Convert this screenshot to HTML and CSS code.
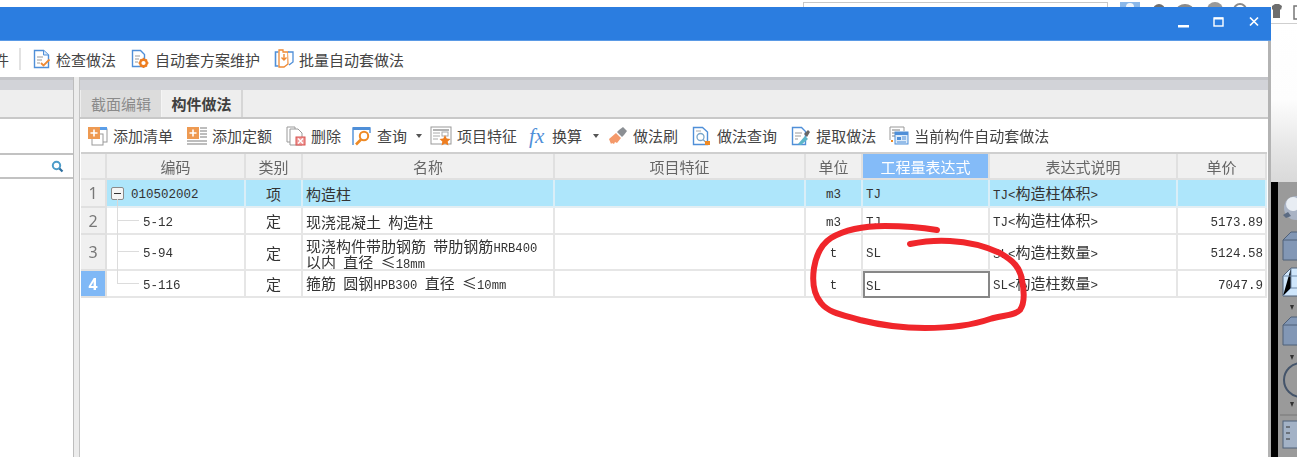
FILE: index.html
```html
<!DOCTYPE html>
<html lang="zh-CN">
<head>
<meta charset="utf-8">
<title>构件做法</title>
<link rel="stylesheet" href="styles.css">
</head>
<body>
<div class="page">
  <div class="left-col">
    <div class="strip">
      <div class="search-box"></div>
      <svg class="strip-icons" width="163" height="7" viewBox="0 0 163 7">
        <rect x="12" y="2" width="20" height="8" fill="#8ab8ea"/>
        <circle cx="22" cy="7" r="4" fill="#eef5fc"/>
        <circle cx="51" cy="10" r="6" fill="#6e6e6e"/>
        <ellipse cx="77" cy="11" rx="9" ry="7" fill="#8a8a8a"/>
        <circle cx="107" cy="10" r="8" fill="#999"/>
        <circle cx="132" cy="10" r="6" fill="none" stroke="#8a8a8a" stroke-width="2"/>
      </svg>
    </div>
    <div class="window">
      <div class="titlebar">
        <svg class="winbtn" width="91" height="14" viewBox="0 0 91 14">
          <rect x="8" y="9" width="11" height="2.5" fill="#fff"/>
          <rect x="44" y="2" width="9" height="8" fill="none" stroke="#fff" stroke-width="1.4"/>
          <rect x="44" y="1.5" width="9" height="2" fill="#fff"/>
          <path d="M80 1.500l8 8M88 1.500l-8 8" stroke="#fff" stroke-width="1.700"/>
        </svg>
      </div>
      <div class="win-body">
        <div class="main-toolbar">
          <span class="clipped">件</span>
          <span class="sep"></span>
          <div class="tool">
            <svg class="ico" width="18" height="20" viewBox="0 0 18 20"><path d="M1.500 1.500h9l5 4.500v12.500h-14z" fill="#fff" stroke="#4f8fd8" stroke-width="1.400"/><path d="M10.500 1.500v4.500h5" fill="#dbe9f8" stroke="#4f8fd8"/><path d="M4 8h6M4 11h5M4 14h3" stroke="#999"/><path d="M8 14l2.500 2.500 6-6" fill="none" stroke="#ee8a35" stroke-width="1.800"/></svg>
            <span>检查做法</span>
          </div>
          <div class="tool tool-auto">
            <svg class="ico" width="19" height="20" viewBox="0 0 19 20"><path d="M1.500 1.500h8l4 4v12h-12z" fill="#fff" stroke="#4f8fd8" stroke-width="1.400"/><path d="M4 7h5M4 10h4M4 13h3" stroke="#999"/><circle cx="12.500" cy="14" r="3.300" fill="#fff" stroke="#ee7d1f" stroke-width="2.400"/><path d="M12.500 8.800v2M12.500 17v2M7.500 14h2M15.500 14h2M9 10.500l1.400 1.400M14.600 16l1.400 1.400M9 17.500l1.400-1.400M14.600 12l1.400-1.400" stroke="#ee7d1f" stroke-width="1.400"/></svg>
            <span>自动套方案维护</span>
          </div>
          <div class="tool">
            <svg class="ico" width="20" height="20" viewBox="0 0 20 20"><path d="M4.500 3h-3v14h3" fill="none" stroke="#4f8fd8" stroke-width="1.600"/><path d="M5 1h4v2h5v12l-4 3h-5z" fill="#fff" stroke="#ee8a35" stroke-width="1.300"/><path d="M14 3h5v10l-4 3" fill="#fff" stroke="#4f8fd8" stroke-width="1.300"/><path d="M10 5v6M7.500 8.500l2.500 2.500 2.500-2.500" fill="none" stroke="#ee8a35" stroke-width="1.400"/></svg>
            <span>批量自动套做法</span>
          </div>
        </div>
        <div class="body-row">
          <aside class="side">
            <div class="side-band"></div>
            <div class="side-tabs"></div>
            <div class="side-blank"></div>
            <div class="side-search">
              <svg width="13" height="13" viewBox="0 0 13 13"><circle cx="5.500" cy="5.500" r="3.700" fill="#fff" stroke="#4d9cc9" stroke-width="2"/><path d="M8.500 8.500l3 3" stroke="#2f6f9f" stroke-width="2.200"/></svg>
            </div>
          </aside>
          <div class="splitter"></div>
          <section class="pane">
            <div class="pane-band"></div>
            <div class="tabs">
              <div class="tab tab-off">截面编辑</div>
              <div class="tab tab-on">构件做法</div>
            </div>
            <div class="sub-toolbar">
              <div class="tool">
                <svg class="ico" width="20" height="20" viewBox="0 0 20 20"><rect x="7" y="3" width="12" height="13" fill="#fff" stroke="#9a9a9a"/><rect x="11" y="1" width="8" height="3" fill="#5b9ee8"/><rect x="4" y="8" width="11" height="11" fill="#fff" stroke="#9a9a9a"/><rect x="0" y="1" width="12" height="12" fill="#ee9a52"/><path d="M6 3.500v7M2.500 7h7" stroke="#fff" stroke-width="1.600"/></svg>
                <span>添加清单</span>
              </div>
              <div class="tool">
                <svg class="ico" width="20" height="20" viewBox="0 0 20 20"><rect x="0" y="1" width="12" height="12" fill="#ee9a52"/><path d="M6 3.500v7M2.500 7h7" stroke="#fff" stroke-width="1.600"/><path d="M13 2h7M13 5h7M13 8h7M13 11h7M0 15h20M0 18h20" stroke="#a8a8a8" stroke-width="1.300"/></svg>
                <span>添加定额</span>
              </div>
              <div class="tool tool-del">
                <svg class="ico" width="20" height="20" viewBox="0 0 20 20"><path d="M1 1h8v15H1z" fill="#fff" stroke="#9a9a9a"/><path d="M4 3h8l4 4v12H4z" fill="#fff" stroke="#9a9a9a"/><rect x="10" y="11" width="9" height="8" fill="#ef9b9b" stroke="#d9534f"/><path d="M12 12.500l5 5M17 12.500l-5 5" stroke="#fff" stroke-width="1.300"/></svg>
                <span>删除</span>
              </div>
              <div class="tool tool-near">
                <svg class="ico" width="20" height="20" viewBox="0 0 20 20"><path d="M1 19V2h17v5" fill="none" stroke="#4f8fd8" stroke-width="1.400"/><rect x="1" y="1" width="17" height="3" fill="#4f8fd8"/><circle cx="12" cy="10" r="4.200" fill="#fff" stroke="#ee8a25" stroke-width="2"/><path d="M9 13.500l-5 5" stroke="#ee8a25" stroke-width="2.600"/></svg>
                <span>查询</span>
                <i class="caret"></i>
              </div>
              <div class="tool tool-close">
                <svg class="ico" width="22" height="20" viewBox="0 0 22 20"><rect x="1" y="1" width="20" height="17" fill="#fff" stroke="#999"/><path d="M3 4h16" stroke="#999" stroke-width="1.500"/><path d="M3 7h7M3 10h7M3 13h5" stroke="#aaa"/><rect x="12" y="6" width="6" height="4" fill="none" stroke="#aaa"/><path d="M15 9l1.700 3.500 3.800.5-2.800 2.600.7 3.800-3.400-1.800-3.400 1.800.7-3.800L9.500 13l3.800-.5z" fill="#ee7d1f"/></svg>
                <span>项目特征</span>
              </div>
              <div class="tool tool-fx">
                <span class="fx">fx</span>
                <span>换算</span>
                <i class="caret"></i>
              </div>
              <div class="tool">
                <svg class="ico" width="20" height="20" viewBox="0 0 20 20"><path d="M11 4l4-3 4 4-3 4-2 2-5-5z" fill="#8b8f94"/><path d="M8 7l5 5-4 5-2-1-1 2-2-1-1 1-2-5z" fill="#f4996a"/></svg>
                <span>做法刷</span>
              </div>
              <div class="tool">
                <svg class="ico" width="20" height="20" viewBox="0 0 20 20"><path d="M1.500 1.500h9l5 4.500v12.500h-14z" fill="#fff" stroke="#4f8fd8" stroke-width="1.400"/><path d="M4 5h5" stroke="#aaa"/><circle cx="8.500" cy="11" r="3.500" fill="#fff" stroke="#7aa6c9" stroke-width="1.300"/><path d="M11 13.500l3 3" stroke="#7aa6c9" stroke-width="1.300"/><rect x="13" y="15" width="5" height="4" fill="#ee8a25"/></svg>
                <span>做法查询</span>
              </div>
              <div class="tool tool-last">
                <svg class="ico" width="20" height="20" viewBox="0 0 20 20"><path d="M1.500 1.500h9l4 4v13h-13z" fill="#fff" stroke="#4f8fd8" stroke-width="1.400"/><path d="M4 7h7M4 10h6M4 13h3" stroke="#999"/><path d="M7 18l7-8 3 3-7 6z" fill="#5cb5c9"/><path d="M13 8l4-4 2 2-3 5z" fill="#666"/></svg>
                <span>提取做法</span>
              </div>
              <div class="tool">
                <svg class="ico" width="20" height="20" viewBox="0 0 20 20"><path d="M1 1h14v4M1 1v13" fill="none" stroke="#999"/><path d="M3 4h8M3 7h3M3 10h3" stroke="#aaa" stroke-width="1.300"/><rect x="6" y="6" width="13" height="12" fill="#dcebfa" stroke="#4f8fd8"/><rect x="6" y="6" width="13" height="3" fill="#4f8fd8"/><rect x="8" y="11" width="4" height="3" fill="#4f8fd8"/><path d="M13 11h4M13 13h4M8 16h9" stroke="#4f8fd8"/><rect x="2" y="14" width="2" height="2" fill="#ee8a25"/></svg>
                <span>当前构件自动套做法</span>
              </div>
            </div>
            <div class="grid">
              <div class="hd"></div>
              <div class="hd">编码</div>
              <div class="hd">类别</div>
              <div class="hd">名称</div>
              <div class="hd">项目特征</div>
              <div class="hd">单位</div>
              <div class="hd hd-sel">工程量表达式</div>
              <div class="hd">表达式说明</div>
              <div class="hd">单价</div>

              <div class="rh">1</div>
              <div class="c c-first sel"><b class="minus"></b><span class="l">010502002</span><i class="stem"></i></div>
              <div class="c ctr sel">项</div>
              <div class="c sel">构造柱</div>
              <div class="c sel"></div>
              <div class="c ctr sel"><span class="l">m3</span></div>
              <div class="c sel"><span class="l">TJ</span></div>
              <div class="c sel"><span class="t"><span class="l">TJ&lt;</span>构造柱体积<span class="l">&gt;</span></span></div>
              <div class="c sel"></div>

              <div class="rh">2</div>
              <div class="c c-code"><i class="branch"></i><span class="l">5-12</span></div>
              <div class="c ctr">定</div>
              <div class="c"><span class="t">现浇混凝土 构造柱</span></div>
              <div class="c"></div>
              <div class="c ctr"><span class="l">m3</span></div>
              <div class="c"><span class="l">TJ</span></div>
              <div class="c"><span class="t"><span class="l">TJ&lt;</span>构造柱体积<span class="l">&gt;</span></span></div>
              <div class="c num"><span class="l">5173.89</span></div>

              <div class="rh">3</div>
              <div class="c c-code"><i class="branch branch-tall"></i><span class="l">5-94</span></div>
              <div class="c ctr">定</div>
              <div class="c"><span class="t t-two">现浇构件带肋钢筋 带肋钢筋<span class="l-s">HRB400</span><br>以内 直径 ≤<span class="l-s">18mm</span></span></div>
              <div class="c"></div>
              <div class="c ctr"><span class="l">t</span></div>
              <div class="c"><span class="l">SL</span></div>
              <div class="c"><span class="t"><span class="l">SL&lt;</span>构造柱数量<span class="l">&gt;</span></span></div>
              <div class="c num"><span class="l">5124.58</span></div>

              <div class="rh rh-sel">4</div>
              <div class="c c-code"><i class="branch branch-last"></i><span class="l">5-116</span></div>
              <div class="c ctr">定</div>
              <div class="c"><span class="t">箍筋 圆钢<span class="l-s">HPB300</span> 直径 ≤<span class="l-s">10mm</span></span></div>
              <div class="c"></div>
              <div class="c ctr"><span class="l">t</span></div>
              <div class="c c-active"><span class="l">SL</span></div>
              <div class="c"><span class="t"><span class="l">SL&lt;</span>构造柱数量<span class="l">&gt;</span></span></div>
              <div class="c num"><span class="l">7047.9</span></div>
            </div>
          </section>
        </div>
      </div>
    </div>
  </div>
  <div class="desk">
    <div class="desk-top">
      <svg width="26" height="24" viewBox="0 0 26 24"><path d="M1 6l3-2h4l3 2-1 4-1-1v9H2V9l-1 1z" fill="#6e6e6e"/><path d="M23 6h4v13h-4z" fill="#fff" stroke="#777" stroke-width="1.500"/></svg>
    </div>
    <div class="desk-mid"></div>
    <div class="desk-low">
      <div class="desk-black"></div>
      <div class="desk-gray">
        <svg width="19" height="275" viewBox="0 0 19 275">
          <circle cx="18" cy="26" r="12" fill="#a9b3c4"/><circle cx="15" cy="22" r="7" fill="#e8edf3"/><path d="M5 33l5-3 3 4-5 2z" fill="#5b6b82"/>
          <path d="M5 58l8-8h7v28H5z" fill="#8297b5" stroke="#4f6078"/><path d="M5 58h15" stroke="#4f6078"/>
          <path d="M5 94l8-8h7v28H5z" fill="#cfe6fb" stroke="#4f6078"/><path d="M5 94h15M13 86v20l-8 8M13 106h7" stroke="#6f88a6"/>
          <path d="M12 123l2 5 2-5z" fill="#333"/>
          <path d="M5 143l8-8h7v28H5z" fill="#8297b5" stroke="#4f6078"/><path d="M5 143h15" stroke="#4f6078"/>
          <path d="M12 173l2 5 2-5z" fill="#333"/>
          <circle cx="23" cy="198" r="17" fill="#9a9a9a" stroke="#44546a" stroke-width="2"/>
          <path d="M12 220l2 5 2-5z" fill="#333"/>
          <path d="M2 233h17" stroke="#777"/>
          <rect x="5" y="239" width="20" height="27" fill="#a3b2c6" stroke="#4f6078"/>
          <path d="M8 245h4M8 251h4M8 257h4" stroke="#333"/>
        </svg>
      </div>
    </div>
  </div>
  <svg class="ink" width="1297" height="457" viewBox="0 0 1297 457">
    <path d="M937 230C925 228 905 226 885 226C866 226 846 229 831 238C820 245 816 256 814 268C812 282 814 295 821 303C829 313 843 315 860 320C880 325 900 328 925 328C950 328 970 326 990 319C1003 315 1014 316 1020 310C1025 303 1024 290 1022 280C1020 268 1014 261 1000 253C985 246 970 242 950 241C935 240 920 242 910 244" fill="none" stroke="#f0262b" stroke-width="6" stroke-linecap="round" stroke-linejoin="round"/>
  </svg>
</div>
</body>
</html>
```
FILE: styles.css
```css
* { box-sizing: border-box; }
html, body { margin: 0; padding: 0; background: #fff; }
.page {
  position: relative;
  display: flex;
  width: 1297px;
  height: 457px;
  overflow: hidden;
  font-family: "Noto Sans CJK SC", "Liberation Sans", sans-serif;
  font-size: 15px;
  color: #444;
  filter: blur(0.45px);
}
.left-col { width: 1271px; display: flex; flex-direction: column; }
.strip { height: 7px; display: flex; padding-left: 803px; overflow: hidden; background: #fff; }
.search-box { width: 305px; height: 12px; margin-top: 2px; border: 1px solid #c8c8c8; }
.strip-icons { display: block; }
.window { flex: 1; display: flex; flex-direction: column; min-height: 0; }
.titlebar {
  height: 34px;
  background: #2b7de0;
  border-bottom: 1px solid #5a9ae6;
  display: flex;
  justify-content: flex-end;
  align-items: center;
  padding-right: 10px;
}
.winbtn { display: block; margin-bottom: 1px; }
.win-body { flex: 1; display: flex; flex-direction: column; border-right: 3px solid #b3b3b3; min-height: 0; }
.main-toolbar { height: 36px; display: flex; align-items: center; gap: 15px; background: #fff; overflow: hidden; }
.clipped { width: 9px; display: flex; justify-content: flex-end; overflow: hidden; margin-right: -5px; }
.sep { width: 2px; height: 22px; background: #e2e2e2; margin-right: -3px; }
.tool { display: flex; align-items: center; gap: 5px; white-space: nowrap; }
.tool-auto { margin-right: -1px; }
.ico { display: block; flex: none; }
.body-row { flex: 1; display: flex; min-height: 0; }
.side { width: 74px; display: flex; flex-direction: column; border-right: 1px solid #bdbdbd; }
.side-band { height: 13px; background: #d2d3d8; border-top: 3px solid #c4c5c9; }
.side-tabs { height: 29px; background: #eeeeee; border-bottom: 2px solid #c8c8c8; }
.side-blank { height: 34px; background: #fff; }
.side-search {
  height: 26px;
  background: #fff;
  border-top: 2px solid #c2c2c2;
  border-bottom: 2px solid #c2c2c2;
  display: flex;
  justify-content: flex-end;
  align-items: center;
  padding-right: 9px;
}
.splitter { width: 6px; background: #ececec; border-right: 1px solid #c4c4c4; }
.pane { flex: 1; display: flex; flex-direction: column; min-width: 0; }
.pane-band { height: 13px; background: #d2d3d8; border-top: 3px solid #c4c5c9; }
.tabs { height: 29px; display: flex; background: #eeeeee; border-bottom: 2px solid #c8c8c8; padding-left: 1px; }
.tab { width: 81px; height: 27px; display: flex; align-items: center; justify-content: center; }
.tab-off { background: #dcdcdc; color: #8a8a8a; border-right: 1px solid #f4f4f4; }
.tab-on { background: #eeeeee; font-weight: 700; color: #3f3f3f; border-right: 2px solid #d6d6d6; }
.sub-toolbar { height: 33px; display: flex; align-items: center; gap: 14px; padding-left: 8px; background: #fff; }
.tool-del { margin-right: -3px; }
.tool-near { margin-right: -6px; }
.tool-near .caret, .tool-fx .caret { margin-left: 4px; }
.tool-close { margin-right: -2px; }
.tool-fx { gap: 7px; margin-right: -5px; }
.tool-last { margin-right: -1px; }
.caret { width: 0; height: 0; border-left: 3.500px solid transparent; border-right: 3.500px solid transparent; border-top: 4px solid #555; }
.fx { width: 16px; font-family: "Liberation Serif", serif; font-style: italic; font-size: 21px; line-height: 20px; color: #4f8fd8; }
.grid {
  display: grid;
  grid-template-columns: 26px 139px 57px 252px 251px 57px 127px 188px 89px;
  grid-template-rows: 26px 28px 27px 36px 27px;
  width: 1186px;
  margin-left: 1px;
  border-top: 2px solid #cfcfcf;
  background: #fff;
  line-height: 1;
}
.hd {
  background: #f0f0f0;
  border-right: 2px solid #e0e0e0;
  border-bottom: 2px solid #e0e0e0;
  display: flex;
  align-items: center;
  justify-content: center;
  font-size: 15px;
  color: #666;
}
.hd-sel { background: #84bbf8; color: #fff; }
.rh {
  background: #f0f0f0;
  border-right: 2px solid #e0e0e0;
  border-bottom: 2px solid #e0e0e0;
  display: flex;
  align-items: center;
  justify-content: center;
  font-family: "Noto Sans", sans-serif;
  font-size: 16px;
  color: #777;
}
.rh-sel { background: #7fb8f6; color: #fff; font-weight: 700; }
.c {
  position: relative;
  border-right: 2px solid #e6e6e6;
  border-bottom: 2px solid #e6e6e6;
  display: flex;
  align-items: center;
  padding-left: 3px;
  color: #333;
  white-space: pre;
  overflow: hidden;
}
.c > .l { margin-top: 5px; }
.t { display: block; word-spacing: 4px; margin-top: 1px; }
.t-two { line-height: 15.500px; margin-top: 3px; }
.l { font-family: "Liberation Mono", monospace; font-size: 12.500px; }
.l-s { font-family: "Liberation Mono", monospace; font-size: 12.200px; }
.t-two .l-s { line-height: 0; }
.sel { background: #aee6fb; border-right-color: #d9eef7; border-bottom-color: #e3eef3; }
.ctr { justify-content: center; padding-left: 0; }
.num { justify-content: flex-end; padding-right: 2px; }
.c-first { padding-left: 4px; overflow: visible; }
.c-code { padding-left: 36px; overflow: visible; }
.minus { width: 13px; height: 13px; flex: none; margin-right: 7px; border: 1px solid #8a8a8a; border-radius: 2px; background: #f5f5f5; display: flex; align-items: center; justify-content: center; }
.minus::before { content: ""; width: 7px; height: 1px; background: #333; }
.stem { position: absolute; left: 10px; top: 19px; width: 1px; height: 10px; background: #d8d8d8; }
.branch { position: absolute; left: 10px; top: -2px; width: 22px; height: 15px; border-left: 1px solid #dcdcdc; border-bottom: 1px solid #dcdcdc; }
.branch::after { content: ""; position: absolute; left: -1px; top: 15px; width: 1px; height: 14px; background: #dcdcdc; }
.branch-tall { height: 19px; }
.branch-tall::after { top: 19px; height: 18px; }
.branch-last { height: 15px; }
.branch-last::after { display: none; }
.c-active { border: 2px solid #878787; padding-left: 1px; }
.desk { flex: 1; display: flex; flex-direction: column; min-width: 0; }
.desk-top { height: 24px; background: #fff; border-bottom: 1px solid #cfcfcf; overflow: hidden; }
.desk-top svg { display: block; }
.desk-mid { height: 158px; background: linear-gradient(#fff, #fdfdfd 48%, #e5e5e5 80%, #d9d9d9); }
.desk-low { flex: 1; display: flex; min-height: 0; }
.desk-black { width: 7px; background: #000; }
.desk-gray { flex: 1; background: #9a9a9a; overflow: hidden; }
.desk-gray svg { display: block; }
.ink { position: absolute; left: 0; top: 0; pointer-events: none; }
```
